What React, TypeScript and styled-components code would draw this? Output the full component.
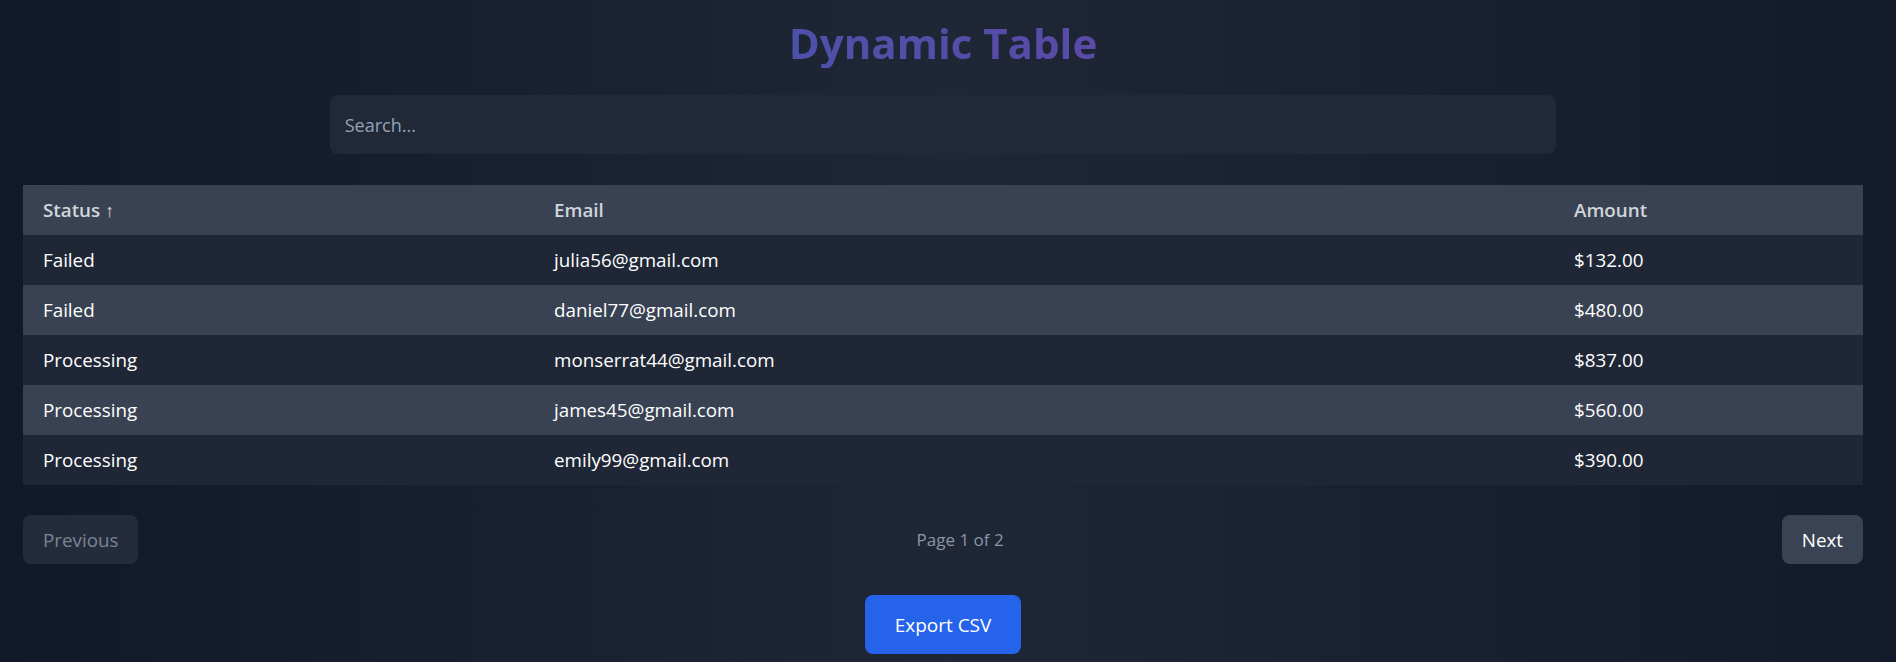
import { useMemo, useState } from "react";
import styled, { createGlobalStyle } from "styled-components";

const GlobalStyle = createGlobalStyle`
  body {
    margin: 0;
    font-family: "Open Sans", "Noto Sans", sans-serif;
    background-color: #111827;
  }
  * {
    box-sizing: border-box;
  }
`;

const Wrapper = styled.div`
  min-height: 100vh;
  padding: 18px 33px 8px 23px;
  display: flex;
  flex-direction: column;
  align-items: center;
  background: linear-gradient(to right, #111827, #1f2737 50%, #131a29);
`;

const Title = styled.h1`
  margin: 0;
  font-size: 42px;
  line-height: 50px;
  font-weight: 700;
  background: linear-gradient(to right, #4c51a8, #5b4aa8);
  -webkit-background-clip: text;
  background-clip: text;
  color: transparent;
`;

const SearchInput = styled.input`
  margin-top: 27px;
  width: 66.666%;
  height: 59px;
  padding: 0 15px;
  border: none;
  border-radius: 8px;
  background-color: #212938;
  color: #fff;
  font-family: inherit;
  font-size: 18px;
  outline: none;
  &::placeholder {
    color: #94a3b8;
  }
`;

const Table = styled.table`
  margin-top: 31px;
  width: 100%;
  border-collapse: collapse;
  table-layout: fixed;
`;

const HeadRow = styled.tr`
  background-color: #394253;
`;

const HeadCell = styled.th`
  height: 50px;
  padding: 0 20px;
  text-align: left;
  font-size: 18.8px;
  font-weight: 600;
  color: #d1d5db;
  cursor: pointer;
  user-select: none;
`;

const Row = styled.tr`
  background-color: #1f2737;
  &:nth-child(even) {
    background-color: #394253;
  }
`;

const Cell = styled.td`
  height: 50px;
  padding: 0 20px;
  font-size: 18.8px;
  color: #fff;
`;

const Pagination = styled.div`
  margin-top: 30px;
  width: 100%;
  display: flex;
  align-items: center;
  justify-content: space-between;
`;

const PageButton = styled.button<{ disabled?: boolean }>`
  height: 49px;
  padding: 0 20px;
  border: none;
  border-radius: 8px;
  font-family: inherit;
  font-size: 18.8px;
  background-color: ${(props) => (props.disabled ? "#242c3b" : "#3a4354")};
  color: ${(props) => (props.disabled ? "#7b8493" : "#ffffff")};
  cursor: ${(props) => (props.disabled ? "not-allowed" : "pointer")};
`;

const PageInfo = styled.span`
  font-size: 17px;
  color: #8b95a3;
`;

const ExportButton = styled.button`
  margin-top: 31px;
  height: 59px;
  padding: 0 30px;
  border: none;
  border-radius: 8px;
  background-color: #2563eb;
  color: #fff;
  font-family: inherit;
  font-size: 19px;
  cursor: pointer;
`;

interface IPayment {
  id: number;
  status: string;
  email: string;
  amount: number;
}

const payments: IPayment[] = [
  { id: 1, status: "Success", email: "ken99@yahoo.com", amount: 316 },
  { id: 2, status: "Success", email: "abe45@gmail.com", amount: 242 },
  { id: 3, status: "Processing", email: "monserrat44@gmail.com", amount: 837 },
  { id: 4, status: "Failed", email: "julia56@gmail.com", amount: 132 },
  { id: 5, status: "Success", email: "silas22@gmail.com", amount: 874 },
  { id: 6, status: "Failed", email: "daniel77@gmail.com", amount: 480 },
  { id: 7, status: "Processing", email: "james45@gmail.com", amount: 560 },
  { id: 8, status: "Success", email: "olivia12@gmail.com", amount: 725 },
  { id: 9, status: "Processing", email: "emily99@gmail.com", amount: 390 },
  { id: 10, status: "Success", email: "liam33@gmail.com", amount: 150 },
];

type SortKey = "status" | "email" | "amount";

const columns: { key: SortKey; label: string; width: number }[] = [
  { key: "status", label: "Status", width: 511 },
  { key: "email", label: "Email", width: 1020 },
  { key: "amount", label: "Amount", width: 309 },
];

const pageSize = 5;

function App() {
  const [query, setQuery] = useState("");
  const [sortKey, setSortKey] = useState<SortKey>("status");
  const [asc, setAsc] = useState(true);
  const [page, setPage] = useState(0);

  const rows = useMemo(() => {
    const filtered = payments.filter((p) =>
      (p.status + p.email + p.amount).toLowerCase().includes(query.toLowerCase())
    );
    return [...filtered].sort((a, b) => {
      const x = a[sortKey];
      const y = b[sortKey];
      const diff = typeof x === "number" ? x - (y as number) : String(x).localeCompare(String(y));
      return asc ? diff : -diff;
    });
  }, [query, sortKey, asc]);

  const pageCount = Math.max(1, Math.ceil(rows.length / pageSize));
  const visible = rows.slice(page * pageSize, page * pageSize + pageSize);

  const onSort = (key: SortKey) => {
    if (key === sortKey) setAsc((prev) => !prev);
    else {
      setSortKey(key);
      setAsc(true);
    }
  };

  const exportCsv = () => {
    const lines = ["status,email,amount", ...rows.map((r) => `${r.status},${r.email},${r.amount}`)];
    const blob = new Blob([lines.join("\n")], { type: "text/csv" });
    const link = document.createElement("a");
    link.href = URL.createObjectURL(blob);
    link.download = "payments.csv";
    link.click();
  };

  return (
    <Wrapper>
      <GlobalStyle />
      <Title>Dynamic Table</Title>
      <SearchInput
        placeholder="Search..."
        value={query}
        onChange={(e) => {
          setQuery(e.target.value);
          setPage(0);
        }}
      />
      <Table>
        <colgroup>
          {columns.map((c) => (
            <col key={c.key} style={{ width: c.width }} />
          ))}
        </colgroup>
        <thead>
          <HeadRow>
            {columns.map((c) => (
              <HeadCell key={c.key} onClick={() => onSort(c.key)}>
                {c.label}
                {sortKey === c.key ? (asc ? " ↑" : " ↓") : ""}
              </HeadCell>
            ))}
          </HeadRow>
        </thead>
        <tbody>
          {visible.map((p) => (
            <Row key={p.id}>
              <Cell>{p.status}</Cell>
              <Cell>{p.email}</Cell>
              <Cell>${p.amount.toFixed(2)}</Cell>
            </Row>
          ))}
        </tbody>
      </Table>
      <Pagination>
        <PageButton disabled={page === 0} onClick={() => setPage((prev) => prev - 1)}>
          Previous
        </PageButton>
        <PageInfo>
          Page {page + 1} of {pageCount}
        </PageInfo>
        <PageButton
          disabled={page >= pageCount - 1}
          onClick={() => setPage((prev) => prev + 1)}
        >
          Next
        </PageButton>
      </Pagination>
      <ExportButton onClick={exportCsv}>Export CSV</ExportButton>
    </Wrapper>
  );
}

export default App;
